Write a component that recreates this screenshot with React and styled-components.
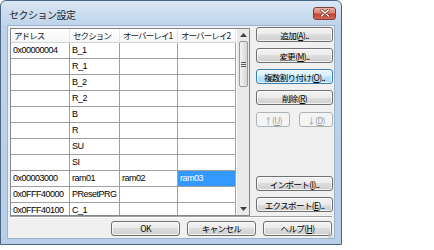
import React from "react";
import styled, { createGlobalStyle } from "styled-components";

const GlobalStyle = createGlobalStyle`
	html, body {
		margin: 0;
		padding: 0;
		background: #ffffff;
	}
	body {
		font-family: "Liberation Sans", "Noto Sans CJK JP", sans-serif;
		font-size: 9px;
		color: #000000;
	}
`;

const columns = ["アドレス", "セクション", "オーバーレイ1", "オーバーレイ2"];
const widths = [59, 50, 58, 58];

const rows = [
	["0x00000004", "B_1", "", ""],
	["", "R_1", "", ""],
	["", "B_2", "", ""],
	["", "R_2", "", ""],
	["", "B", "", ""],
	["", "R", "", ""],
	["", "SU", "", ""],
	["", "SI", "", ""],
	["0x00003000", "ram01", "ram02", "ram03"],
	["0x0FFF40000", "PResetPRG", "", ""],
	["0x0FFF40100", "C_1", "", ""],
];

const Label = ({ text, mn, dots }) => (
	<span>
		{text}(<u>{mn}</u>){dots ? ".." : ""}
	</span>
);

const App = () => {
	return (
		<>
			<GlobalStyle />
			<Window>
				<TitleBar>
					<Title>セクション設定</Title>
					<CloseButton>
						<svg width="10" height="8" viewBox="0 0 10 8">
							<path
								d="M1.5 1 L8.5 7 M8.5 1 L1.5 7"
								stroke="#5a1f1f"
								strokeWidth="2.6"
								strokeLinecap="round"
							/>
							<path
								d="M1.5 1 L8.5 7 M8.5 1 L1.5 7"
								stroke="#ffffff"
								strokeWidth="1.6"
								strokeLinecap="round"
							/>
						</svg>
					</CloseButton>
				</TitleBar>
				<Client>
					<Main>
						<ListView>
							<Columns>
								<HeaderRow>
									{columns.map((c, i) => (
										<HeaderCell key={c} $w={widths[i]}>
											{c}
										</HeaderCell>
									))}
								</HeaderRow>
								{rows.map((r, ri) => (
									<Row key={ri}>
										{r.map((v, ci) => (
											<Cell
												key={ci}
												$w={widths[ci]}
												$selected={ri === 8 && ci === 3}
											>
												{v}
											</Cell>
										))}
									</Row>
								))}
							</Columns>
							<ScrollBar>
								<Arrow>
									<svg width="7" height="4" viewBox="0 0 7 4">
										<path d="M0 4 L3.5 0 L7 4 Z" fill="#404040" />
									</svg>
								</Arrow>
								<Track>
									<Thumb>
										<Grip />
									</Thumb>
								</Track>
								<Arrow>
									<svg width="7" height="4" viewBox="0 0 7 4">
										<path d="M0 0 L3.5 4 L7 0 Z" fill="#404040" />
									</svg>
								</Arrow>
							</ScrollBar>
						</ListView>
						<Side>
							<Button>
								<Label text="追加" mn="A" dots />
							</Button>
							<Button>
								<Label text="変更" mn="M" dots />
							</Button>
							<Button $focus>
								<Label text="複数割り付け" mn="O" dots />
							</Button>
							<Button>
								<Label text="削除" mn="R" />
							</Button>
							<ArrowPair>
								<Button $disabled $w={34}>
									<Label text="↑" mn="U" />
								</Button>
								<Button $disabled $w={34}>
									<Label text="↓" mn="D" />
								</Button>
							</ArrowPair>
							<Spacer />
							<Button>
								<Label text="インポート" mn="I" dots />
							</Button>
							<Button>
								<Label text="エクスポート" mn="E" dots />
							</Button>
						</Side>
					</Main>
					<Separator />
					<Footer>
						<Button $w={69}>OK</Button>
						<Button $w={69}>キャンセル</Button>
						<Button $w={69}>
							<Label text="ヘルプ" mn="H" />
						</Button>
						<SizeGrip />
					</Footer>
				</Client>
			</Window>
		</>
	);
};

export default App;

const Window = styled.div`
	width: 342px;
	height: 245px;
	box-sizing: border-box;
	border: 1px solid #4a6584;
	border-radius: 6px 6px 0 0;
	background: linear-gradient(#dbe7f4 0px, #c9dbef 14px, #bcd2ea 26px, #b7cfe9 100%);
	padding: 0 6px 5px 6px;
	display: flex;
	flex-direction: column;
`;

const TitleBar = styled.div`
	height: 24px;
	display: flex;
	align-items: center;
	justify-content: space-between;
	padding: 0 0 0 2px;
`;

const Title = styled.div`
	font-family: "Noto Sans CJK JP", sans-serif;
	font-size: 10px;
	color: #1e1e1e;
	letter-spacing: -0.5px;
	padding-top: 2px;
`;

const CloseButton = styled.div`
	width: 23px;
	height: 13px;
	box-sizing: border-box;
	border: 1px solid #7b3f3a;
	border-radius: 3px;
	background: linear-gradient(#eab2a4 0%, #d9826f 45%, #c7432e 55%, #d0695a 100%);
	display: flex;
	align-items: center;
	justify-content: center;
	margin: 0 -1px 0 0;
`;

const Client = styled.div`
	flex: 1;
	background: #f0f0f0;
	border: 1px solid #9fb3cc;
	display: flex;
	flex-direction: column;
	padding: 2px 1px 0 2px;
`;

const Main = styled.div`
	display: flex;
	gap: 6px;
`;

const ListView = styled.div`
	width: 240px;
	height: 188px;
	box-sizing: border-box;
	border: 1px solid #828790;
	background: #ffffff;
	display: flex;
	overflow: hidden;
`;

const Columns = styled.div`
	width: 225px;
	display: flex;
	flex-direction: column;
`;

const HeaderRow = styled.div`
	display: flex;
	height: 13px;
	border-bottom: 1px solid #d5d5d5;
	background: linear-gradient(#ffffff, #f5f6f7);
`;

const HeaderCell = styled.div`
	width: ${(p) => p.$w}px;
	box-sizing: border-box;
	padding-left: 3px;
	border-right: 1px solid #e3e5e7;
	font-family: "Noto Sans CJK JP", sans-serif;
	font-size: 8.5px;
	letter-spacing: -0.9px;
	line-height: 13px;
	color: #1a1a1a;
	white-space: nowrap;
	overflow: hidden;
`;

const Row = styled.div`
	display: flex;
	height: 16px;
`;

const Cell = styled.div`
	width: ${(p) => p.$w}px;
	box-sizing: border-box;
	border-right: 1px solid #a0a0a0;
	border-bottom: 1px solid #a0a0a0;
	padding-left: 2px;
	line-height: 15px;
	font-size: 9px;
	letter-spacing: -0.5px;
	white-space: nowrap;
	overflow: hidden;
	background: ${(p) => (p.$selected ? "#3399ff" : "transparent")};
	color: ${(p) => (p.$selected ? "#ffffff" : "#000000")};
`;

const ScrollBar = styled.div`
	width: 14px;
	margin-left: 1px;
	display: flex;
	flex-direction: column;
	background: #eaeaea;
	border-left: 1px solid #e6e6e6;
`;

const Arrow = styled.div`
	height: 12px;
	display: flex;
	align-items: center;
	justify-content: center;
`;

const Track = styled.div`
	flex: 1;
	padding: 0 1px;
`;

const Thumb = styled.div`
	height: 46px;
	box-sizing: border-box;
	border: 1px solid #9a9a9a;
	border-radius: 2px;
	background: linear-gradient(90deg, #f3f3f3, #e4e4e4 50%, #d6d6d6);
	display: flex;
	align-items: center;
	justify-content: center;
`;

const Grip = styled.div`
	width: 5px;
	height: 5px;
	background: repeating-linear-gradient(#5a5a5a 0 1px, transparent 1px 2px);
`;

const Side = styled.div`
	width: 77px;
	height: 185px;
	margin-top: -1px;
	display: flex;
	flex-direction: column;
	gap: 6px;
`;

const ArrowPair = styled.div`
	display: flex;
	justify-content: space-between;
	margin-top: 1px;
`;

const Spacer = styled.div`
	flex: 1;
`;

const Button = styled.div`
	width: ${(p) => (p.$w ? `${p.$w}px` : "77px")};
	height: 15px;
	flex-shrink: 0;
	box-sizing: border-box;
	border: 1px solid
		${(p) => (p.$focus ? "#3c7fb1" : p.$disabled ? "#adb2b5" : "#707070")};
	border-radius: 3px;
	background: ${(p) =>
		p.$disabled
			? "#f4f4f4"
			: p.$focus
			? "linear-gradient(#eaf6fd 0%, #d9f0fc 50%, #bee6fd 50%, #a7d9f5 100%)"
			: "linear-gradient(#f2f2f2 0%, #ebebeb 50%, #dddddd 50%, #cfcfcf 100%)"};
	box-shadow: inset 0 0 0 1px
		${(p) => (p.$disabled ? "transparent" : "rgba(255, 255, 255, 0.7)")};
	color: ${(p) => (p.$disabled ? "#9a9a9a" : "#000000")};
	font-family: "Noto Sans CJK JP", sans-serif;
	font-size: 8.5px;
	letter-spacing: -0.6px;
	display: flex;
	align-items: center;
	justify-content: center;
	white-space: nowrap;

	u {
		text-underline-offset: 1px;
	}
`;

const Separator = styled.div`
	height: 0;
	margin-right: 1px;
	border-top: 1px solid #a0a0a0;
	border-bottom: 1px solid #ffffff;
`;

const Footer = styled.div`
	flex: 1;
	display: flex;
	justify-content: flex-end;
	align-items: center;
	gap: 7px;
	padding-right: 1px;
	position: relative;
`;

const SizeGrip = styled.div`
	position: absolute;
	right: 0;
	bottom: 0;
	width: 5px;
	height: 5px;
	background: radial-gradient(circle, #b8b8b8 0.6px, transparent 0.8px) 0 0 / 2px 2px;
`;
